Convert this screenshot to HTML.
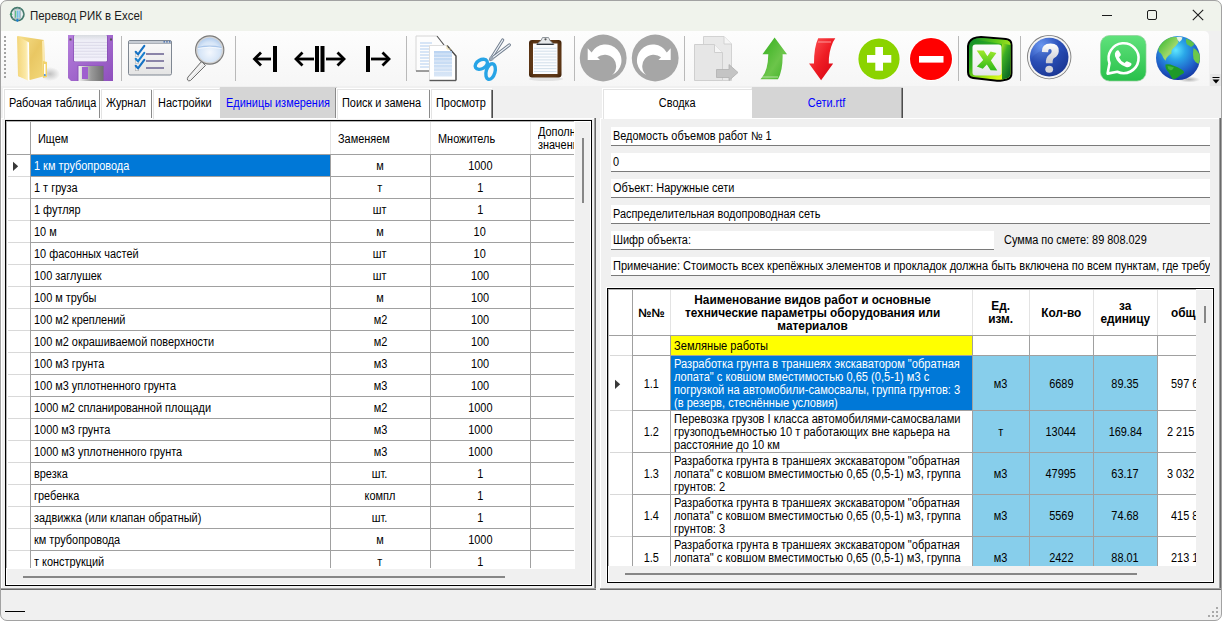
<!DOCTYPE html><html><head><meta charset="utf-8"><style>
*{box-sizing:border-box;margin:0;padding:0}
html,body{width:1222px;height:621px;overflow:hidden;background:#fff}
body{font-family:"Liberation Sans",sans-serif;font-size:12px;color:#000;position:relative}
.a{position:absolute;white-space:nowrap}
#win{position:absolute;left:0;top:0;width:1222px;height:621px;background:#f0f0f0;border-radius:7px;overflow:hidden}
#frame{position:absolute;left:0;top:0;width:1222px;height:621px;border:1px solid #a2a2a2;border-radius:7px}
#title{position:absolute;left:0;top:0;width:1222px;height:31px;background:#f0f3ec}
#tb{position:absolute;left:0;top:31px;width:1209px;height:55px;background:linear-gradient(#fdfdfd,#f6f6f6);border-top-right-radius:5px}
.sep{position:absolute;top:36px;width:1px;height:45px;background:#b9b9b9}
.hl{position:absolute;background:#a0a0a0;height:1px}
.vl{position:absolute;background:#a0a0a0;width:1px}
</style></head><body><div id="win">
<div id="title"></div>
<svg class="a" style="left:9px;top:6px" width="17" height="17" viewBox="0 0 17 17"><circle cx="8.4" cy="8.2" r="6.5" fill="#e9eef0" stroke="#3d7668" stroke-width="1.7"/><circle cx="8.4" cy="8.2" r="6.5" fill="none" stroke="#9ab0aa" stroke-width="0.6" stroke-dasharray="1 2"/><rect x="5.2" y="3.8" width="6.4" height="8.6" fill="#e4e8ea" stroke="#8fa2aa" stroke-width="0.6"/><rect x="6" y="4.6" width="1.3" height="7.2" fill="#5fbf86"/><rect x="7.8" y="4.6" width="1.3" height="7.2" fill="#74bde6"/><rect x="9.5" y="4.6" width="1.3" height="7.2" fill="#74bde6"/><path d="M8.4 12.4 L10.1 14.2 L8.4 16 L6.7 14.2 Z" fill="#1f7fd0"/><circle cx="2.1" cy="8.2" r="1.2" fill="#3a9a6a"/></svg>
<div class="a" style="left:30px;top:9px;line-height:15px;font-size:12px;color:#1b1b1b;"><span style="display:inline-block;transform:scaleX(0.955);transform-origin:0 0">Перевод РИК в Excel</span></div>
<div class="a" style="left:1102px;top:15px;width:10px;height:1px;background:#1c1c1c"></div>
<div class="a" style="left:1147px;top:10px;width:10px;height:10px;border:1px solid #1c1c1c;border-radius:2px"></div>
<svg class="a" style="left:1192px;top:9px" width="12" height="12" viewBox="0 0 12 12"><path d="M0.8 0.8L11.2 11.2M11.2 0.8L0.8 11.2" stroke="#1c1c1c" stroke-width="1.1"/></svg>
<div class="a" style="left:586px;top:0;width:230px;height:1px;background:repeating-linear-gradient(90deg,#555 0 3px,transparent 3px 6px);opacity:0.55"></div>
<div id="tb"></div>
<div class="a" style="left:4px;top:36px;width:2px;height:2px;background:#a3a3a3"></div>
<div class="a" style="left:4px;top:40px;width:2px;height:2px;background:#a3a3a3"></div>
<div class="a" style="left:4px;top:44px;width:2px;height:2px;background:#a3a3a3"></div>
<div class="a" style="left:4px;top:48px;width:2px;height:2px;background:#a3a3a3"></div>
<div class="a" style="left:4px;top:52px;width:2px;height:2px;background:#a3a3a3"></div>
<div class="a" style="left:4px;top:56px;width:2px;height:2px;background:#a3a3a3"></div>
<div class="a" style="left:4px;top:60px;width:2px;height:2px;background:#a3a3a3"></div>
<div class="a" style="left:4px;top:64px;width:2px;height:2px;background:#a3a3a3"></div>
<div class="a" style="left:4px;top:68px;width:2px;height:2px;background:#a3a3a3"></div>
<div class="a" style="left:4px;top:72px;width:2px;height:2px;background:#a3a3a3"></div>
<div class="a" style="left:4px;top:76px;width:2px;height:2px;background:#a3a3a3"></div>
<div class="sep" style="left:121px"></div>
<div class="sep" style="left:235px"></div>
<div class="sep" style="left:406px"></div>
<div class="sep" style="left:574px"></div>
<div class="sep" style="left:684px"></div>
<div class="sep" style="left:958px"></div>
<div class="sep" style="left:1020px"></div>
<!-- folder -->
<svg class="a" style="left:10px;top:32px" width="50" height="52" viewBox="0 0 50 52">
 <defs>
  <linearGradient id="fb" x1="0" y1="0" x2="1" y2="1"><stop offset="0" stop-color="#f6df8c"/><stop offset="0.5" stop-color="#e9c763"/><stop offset="1" stop-color="#f3d97c"/></linearGradient>
  <linearGradient id="ff" x1="0" y1="0" x2="1" y2="0"><stop offset="0" stop-color="#f3d57a"/><stop offset="0.7" stop-color="#fbe8a4"/><stop offset="1" stop-color="#fff6d0"/></linearGradient>
  <radialGradient id="fs" cx="0.5" cy="0.5" r="0.5"><stop offset="0" stop-color="#000" stop-opacity="0.22"/><stop offset="1" stop-color="#000" stop-opacity="0"/></radialGradient>
 </defs>
 <ellipse cx="40" cy="42" rx="10" ry="7" fill="url(#fs)"/>
 <path d="M8 4 L34 8 L35 44 L20 48 L8 44 Z" fill="url(#fb)"/>
 <path d="M34 8 L35 44 L33 45 L32 9 Z" fill="#fbeab0"/>
 <path d="M33 29 L37 30 L37 45 L33 46 Z" fill="#f2d36c"/>
 <rect x="34" y="32" width="1.5" height="11" fill="#fff"/>
 <circle cx="34.8" cy="43" r="1" fill="#3b8cf0"/>
 <path d="M7 4 L18.5 10 L19 49 L8 44 Z" fill="url(#ff)"/>
 <path d="M17.5 10 L19 10.5 L19.5 49 L18 48.5 Z" fill="#fff"/>
</svg>
<!-- floppy -->
<svg class="a" style="left:64px;top:32px" width="52" height="52" viewBox="0 0 52 52">
 <defs>
  <linearGradient id="fp" x1="0" y1="0" x2="1" y2="1"><stop offset="0" stop-color="#b57fdc"/><stop offset="1" stop-color="#8e4fbd"/></linearGradient>
  <linearGradient id="fl" x1="0" y1="0" x2="0" y2="1"><stop offset="0" stop-color="#d8dbe0"/><stop offset="0.2" stop-color="#eeeef6"/><stop offset="1" stop-color="#f2f0fb"/></linearGradient>
  <linearGradient id="fsh" x1="0" y1="0" x2="1" y2="0"><stop offset="0" stop-color="#f4f4f4"/><stop offset="0.5" stop-color="#9a9a9a"/><stop offset="1" stop-color="#6f6f6f"/></linearGradient>
 </defs>
 <path d="M4 3 L49 3 L49 49 L7 49 L4 46 Z" fill="url(#fp)"/>
 <rect x="9.5" y="3" width="34" height="27" rx="1.5" fill="#7b43a8"/>
 <rect x="10" y="3" width="33" height="26.5" rx="1" fill="url(#fl)"/>
 <g stroke="#d8d6e6" stroke-width="0.8"><line x1="10" y1="10.5" x2="43" y2="10.5"/><line x1="10" y1="13.4" x2="43" y2="13.4"/><line x1="10" y1="16.3" x2="43" y2="16.3"/><line x1="10" y1="19.3" x2="43" y2="19.3"/><line x1="10" y1="22.2" x2="43" y2="22.2"/><line x1="10" y1="25.1" x2="43" y2="25.1"/></g>
 <rect x="5.5" y="6.5" width="2" height="2" fill="#555"/>
 <rect x="46" y="6.5" width="2" height="2" fill="#555"/>
 <rect x="13.5" y="33.5" width="26" height="15.5" fill="#8a52b8"/>
 <rect x="14.5" y="34" width="25" height="15" fill="url(#fsh)"/>
 <rect x="18" y="35" width="6" height="12" fill="#9f5fcf"/>
</svg>
<!-- checklist -->
<svg class="a" style="left:124px;top:34px" width="52" height="48" viewBox="0 0 52 48">
 <defs><linearGradient id="cw" x1="0" y1="0" x2="0" y2="1"><stop offset="0" stop-color="#fbfbfb"/><stop offset="1" stop-color="#e4e4e4"/></linearGradient></defs>
 <rect x="4.5" y="6.5" width="43" height="34.5" rx="1.5" fill="url(#cw)" stroke="#7f8792" stroke-width="1"/>
 <rect x="5" y="7" width="42" height="2.2" fill="#c6ccd4"/>
 <rect x="5" y="9.2" width="42" height="0.8" fill="#9aa0a8"/><rect x="39.5" y="7.2" width="1.5" height="1.3" fill="#3a64a8"/><rect x="42.2" y="7.2" width="1.5" height="1.3" fill="#3a64a8"/><rect x="45" y="7.2" width="1.5" height="1.3" fill="#3a64a8"/>
 <g fill="#f4f4f4" stroke="#b0b0b0" stroke-width="0.6"><rect x="11.3" y="19.3" width="3.4" height="3.4"/><rect x="11.3" y="26.3" width="3.4" height="3.4"/><rect x="11.3" y="33.3" width="3.4" height="3.4"/></g>
 <g stroke="#8a84a8" stroke-width="1.8"><line x1="22" y1="20" x2="40" y2="20"/><line x1="22" y1="27" x2="40" y2="27"/><line x1="22" y1="34" x2="40" y2="34"/></g>
 <g fill="none" stroke-width="2.1" stroke-linecap="round" stroke-linejoin="round"><path d="M11.7 17.8 L14 20.4 L20.3 11.9" stroke="#1672c4"/><path d="M11.7 24.8 L14 27.4 L20.3 18.9" stroke="#1a80cf"/><path d="M11.7 31.8 L14 34.4 L20.3 25.9" stroke="#1672c4"/></g>
</svg>
<!-- magnifier -->
<svg class="a" style="left:184px;top:32px" width="46" height="52" viewBox="0 0 46 52">
 <defs>
  <radialGradient id="mg" cx="0.5" cy="0.6" r="0.6"><stop offset="0" stop-color="#f4f8fe"/><stop offset="0.7" stop-color="#d6e5f7"/><stop offset="1" stop-color="#b3cdee"/></radialGradient>
 </defs>
 <path d="M17.5 29.5 L21.5 33.5 L6.5 48.5 Q4.5 49.5 3.5 48 Q3 46.5 4 45 Z" fill="#eaeaea" stroke="#6e6e6e" stroke-width="1"/>
 <path d="M18.5 31.5 L5.5 46" stroke="#fff" stroke-width="1"/>
 <circle cx="25.7" cy="18" r="14.7" fill="#7a7a7a"/>
 <circle cx="25.7" cy="18" r="13.6" fill="#d4d4d4"/>
 <circle cx="25.7" cy="18" r="12.2" fill="url(#mg)"/>
 <path d="M13.8 15.5 Q25.7 12.8 37.6 15.5" stroke="#aac6ea" stroke-width="1.2" fill="none"/>
 <path d="M13.8 16.5 Q25.7 13.8 37.6 16.5" stroke="#fff" stroke-width="0.8" fill="none" opacity="0.8"/>
</svg>
<!-- align arrows -->
<svg class="a" style="left:250px;top:44px" width="150" height="30" viewBox="0 0 150 30">
 <g fill="none" stroke="#000" stroke-width="2.8" stroke-linecap="butt" stroke-linejoin="miter">
  <path d="M5 15 H21"/><path d="M11 8.5 L4.5 15 L11 21.5"/>
  <path d="M46.5 15 H64"/><path d="M52.5 8.5 L46 15 L52.5 21.5"/>
  <path d="M76 15 H93"/><path d="M87.5 8.5 L94 15 L87.5 21.5"/>
  <path d="M121 15 H138"/><path d="M132.5 8.5 L139 15 L132.5 21.5"/>
 </g>
 <rect x="23" y="2" width="4" height="26" fill="#000"/>
 <rect x="65" y="2" width="4" height="26" fill="#000"/>
 <rect x="70.5" y="2" width="4" height="26" fill="#000"/>
 <rect x="116" y="2" width="4" height="26" fill="#000"/>
</svg>
<!-- copy -->
<svg class="a" style="left:410px;top:32px" width="55" height="52" viewBox="0 0 55 52">
 <defs><linearGradient id="cb" x1="0" y1="0" x2="0" y2="1"><stop offset="0" stop-color="#a9c9ef"/><stop offset="1" stop-color="#cfe0f4"/></linearGradient></defs>
 <path d="M6 4 L27 4 L34 13 L34 39 L6 39 Z" fill="#fdfdfd" stroke="#d6d6d6" stroke-width="1"/>
 <path d="M27 4 L34 13" stroke="#555" stroke-width="1.1"/>
 <g stroke="#b8d2f0" stroke-width="1.1"><line x1="10" y1="11" x2="22" y2="11"/><line x1="10" y1="14" x2="28" y2="14"/><line x1="10" y1="17" x2="28" y2="17"/><line x1="10" y1="20" x2="28" y2="20"/><line x1="10" y1="23" x2="28" y2="23"/><line x1="10" y1="26" x2="28" y2="26"/><line x1="10" y1="29" x2="28" y2="29"/><line x1="10" y1="32" x2="28" y2="32"/><line x1="10" y1="35" x2="28" y2="35"/></g>
 <path d="M6 39 L20 39" stroke="#6a6a6a" stroke-width="1.2"/>
 <path d="M19.5 13.5 L37 13.5 L46 24 L46 48.5 L19.5 48.5 Z" fill="#fff" stroke="#dedede" stroke-width="1"/>
 <path d="M37 13.5 L46 24 L46 48.5" fill="none" stroke="#4a4a4a" stroke-width="1.4"/>
 <path d="M19.5 48.5 L46 48.5" stroke="#5a5a5a" stroke-width="1.4"/>
 <rect x="24" y="19" width="18" height="25.5" fill="url(#cb)" opacity="0.8"/>
 <g stroke="#fff" stroke-width="0.9" opacity="0.55"><line x1="24" y1="22" x2="42" y2="22"/><line x1="24" y1="25.5" x2="42" y2="25.5"/><line x1="24" y1="29" x2="42" y2="29"/><line x1="24" y1="32.5" x2="42" y2="32.5"/><line x1="24" y1="36" x2="42" y2="36"/><line x1="24" y1="39.5" x2="42" y2="39.5"/></g>
 <path d="M37 13.5 L37 17 L41 17" fill="none" stroke="#e8d8a0" stroke-width="0.8"/>
</svg>
<!-- scissors -->
<svg class="a" style="left:460px;top:34px" width="55" height="50" viewBox="0 0 55 50">
 <path d="M30.5 25.5 L42.7 6" stroke="#6f7c8c" stroke-width="3.2" stroke-linecap="round"/>
 <path d="M30.5 25.5 L42.7 6" stroke="#eef2f8" stroke-width="1.3" stroke-linecap="round"/>
 <path d="M31 25 L49.3 10.9" stroke="#6f7c8c" stroke-width="3.2" stroke-linecap="round"/>
 <path d="M31 25 L49.3 10.9" stroke="#eef2f8" stroke-width="1.3" stroke-linecap="round"/>
 <circle cx="31.5" cy="24.5" r="2.2" fill="#9aa6b4"/>
 <ellipse cx="21.3" cy="30.3" rx="6.6" ry="4.4" transform="rotate(-30 21.3 30.3)" fill="none" stroke="#27a4e6" stroke-width="3.4"/>
 <ellipse cx="30.6" cy="37.6" rx="8" ry="4.4" transform="rotate(-74 30.6 37.6)" fill="none" stroke="#27a4e6" stroke-width="3.4"/>
</svg>
<!-- clipboard -->
<svg class="a" style="left:522px;top:32px" width="48" height="52" viewBox="0 0 48 52">
 <defs><radialGradient id="clb" cx="0.5" cy="0.5" r="0.7"><stop offset="0" stop-color="#6e4622"/><stop offset="0.8" stop-color="#5a3414"/><stop offset="1" stop-color="#3c1f08"/></radialGradient></defs>
 <ellipse cx="24" cy="47" rx="17" ry="2" fill="#000" opacity="0.08"/>
 <rect x="7" y="8" width="32.5" height="37.5" rx="3" fill="url(#clb)"/>
 <rect x="11" y="11.5" width="24.5" height="30.5" fill="#fbfcfe"/>
 <g stroke="#cddbe8" stroke-width="0.9"><line x1="12" y1="16.3" x2="34.5" y2="16.3"/><line x1="12" y1="19.2" x2="34.5" y2="19.2"/><line x1="12" y1="22.1" x2="34.5" y2="22.1"/><line x1="12" y1="25.0" x2="34.5" y2="25.0"/><line x1="12" y1="27.9" x2="34.5" y2="27.9"/><line x1="12" y1="30.8" x2="34.5" y2="30.8"/><line x1="12" y1="33.7" x2="34.5" y2="33.7"/><line x1="12" y1="36.6" x2="34.5" y2="36.6"/><line x1="12" y1="39.5" x2="34.5" y2="39.5"/></g>
 <path d="M14.5 12.5 L19 8.5 L20.5 5.5 L26.5 5.5 L28 8.5 L32 12.5 Z" fill="#e6e8ea" stroke="#7a8088" stroke-width="0.8"/>
 <path d="M15 12.3 L31.5 12.3" stroke="#2a3038" stroke-width="1.3"/>
 <circle cx="23.5" cy="7.3" r="1.1" fill="#555"/>
</svg>
<!-- undo -->
<svg class="a" style="left:579px;top:34px" width="48" height="48" viewBox="0 0 48 48">
 <circle cx="24.2" cy="24" r="23.4" fill="#a6a6a6"/>
 <path d="M8.7 14.3 L8.7 26 L21 26 L18.3 23.3 A10.6 10.6 0 1 1 33 41 A16 16 0 1 0 12.6 18.4 Z" fill="#fff"/>
</svg>
<!-- redo -->
<svg class="a" style="left:631px;top:34px" width="48" height="48" viewBox="0 0 48 48">
 <g transform="translate(48.4 0) scale(-1 1)">
 <circle cx="24.2" cy="24" r="23.4" fill="#a6a6a6"/>
 <path d="M8.7 14.3 L8.7 26 L21 26 L18.3 23.3 A10.6 10.6 0 1 1 33 41 A16 16 0 1 0 12.6 18.4 Z" fill="#fff"/>
 </g>
</svg>
<!-- disabled doc arrow -->
<svg class="a" style="left:688px;top:32px" width="54" height="52" viewBox="0 0 54 52">
 <path d="M15.5 4.5 L36 4.5 L43.5 12 L43.5 48.5 L15.5 48.5 Z" fill="#e9e9e9" stroke="#d2d2d2" stroke-width="1"/>
 <path d="M36 4.5 L36 12 L43.5 12" fill="#f6f6f6" stroke="#d2d2d2" stroke-width="1"/>
 <path d="M6.5 12.5 L26.5 12.5 L34.5 20.5 L34.5 48.5 L6.5 48.5 Z" fill="#e6e6e6" stroke="#cfcfcf" stroke-width="1"/>
 <path d="M26.5 12.5 L26.5 20.5 L34.5 20.5" fill="#f6f6f6" stroke="#cfcfcf" stroke-width="1"/>
 <path d="M28.5 37.5 L41 37.5 L41 32.5 L50 40.5 L41 48.5 L41 45.5 L28.5 45.5 Z" fill="#c4c4c4" stroke="#b0b0b0" stroke-width="0.8"/>
</svg>
<!-- green up arrow -->
<svg class="a" style="left:752px;top:32px" width="42" height="52" viewBox="0 0 42 52">
 <defs><linearGradient id="ga" x1="0" y1="0" x2="1" y2="1"><stop offset="0" stop-color="#2fae1a"/><stop offset="0.6" stop-color="#6cc54a"/><stop offset="1" stop-color="#3fb128"/></linearGradient></defs>
 <path d="M22.6 5.4 L35 22.2 L30.6 22.2 Q31 38 26 47.3 L8.4 47.3 Q16 40 16.3 22.2 L10.5 22.2 Z" fill="url(#ga)"/>
 <path d="M10 45 L26 45" stroke="#b8e6a6" stroke-width="1.2" opacity="0.8"/>
</svg>
<!-- red down arrow -->
<svg class="a" style="left:800px;top:32px" width="42" height="52" viewBox="0 0 42 52">
 <defs><linearGradient id="ra" x1="0" y1="0" x2="1" y2="1"><stop offset="0" stop-color="#ff5a5a"/><stop offset="0.5" stop-color="#ee1c24"/><stop offset="1" stop-color="#d40010"/></linearGradient></defs>
 <path d="M18.2 6.3 L35.3 6.3 L33 10 Q28.5 20 28.8 31.4 L33.2 31.4 L21.1 48.2 L9 31.4 L14 31.4 Q14 15 18.2 6.3 Z" fill="url(#ra)"/>
 <path d="M18 10 L31 10" stroke="#ff9e9e" stroke-width="1.2" opacity="0.8"/>
</svg>
<!-- green plus -->
<svg class="a" style="left:856px;top:36px" width="46" height="46" viewBox="0 0 46 46">
 <circle cx="23" cy="23" r="21.5" fill="#fff" opacity="0.6"/>
 <circle cx="23" cy="23" r="20.6" fill="#8bd300"/>
 <rect x="19.3" y="11" width="7.7" height="23.7" fill="#fff"/>
 <rect x="11" y="19" width="24.3" height="7.7" fill="#fff"/>
</svg>
<!-- red minus -->
<svg class="a" style="left:908px;top:36px" width="46" height="46" viewBox="0 0 46 46">
 <circle cx="23" cy="23" r="22" fill="#fff"/>
 <circle cx="23" cy="23" r="21" fill="#ff0000"/>
 <rect x="11" y="20" width="24.5" height="6.6" fill="#fff"/>
</svg>
<!-- excel -->
<svg class="a" style="left:962px;top:32px" width="54" height="52" viewBox="0 0 54 52">
 <defs>
  <linearGradient id="xs" x1="0" y1="0" x2="0.6" y2="1"><stop offset="0" stop-color="#a8e020"/><stop offset="0.35" stop-color="#3cae24"/><stop offset="1" stop-color="#0b6a22"/></linearGradient>
  <linearGradient id="xf" x1="0" y1="0" x2="0.8" y2="1"><stop offset="0" stop-color="#0e8a2e"/><stop offset="0.45" stop-color="#36b21e"/><stop offset="0.8" stop-color="#b6ec10"/><stop offset="1" stop-color="#e8ff20"/></linearGradient>
  <linearGradient id="xt" x1="0" y1="0" x2="1" y2="0"><stop offset="0" stop-color="#1a8f2c"/><stop offset="0.6" stop-color="#5cc81a"/><stop offset="1" stop-color="#9fe020"/></linearGradient>
  <linearGradient id="xw" x1="0" y1="0" x2="0" y2="1"><stop offset="0" stop-color="#fbfbfb"/><stop offset="0.7" stop-color="#f0f0f2"/><stop offset="1" stop-color="#e2e2ea"/></linearGradient>
  <linearGradient id="xx" x1="0" y1="0" x2="0" y2="1"><stop offset="0" stop-color="#9fe82a"/><stop offset="1" stop-color="#2cb81c"/></linearGradient>
 </defs>
 <path d="M5 14 Q5.5 8 11 5.5 Q14 4 19 4 L44 6 Q50.5 6.5 50.5 13 L50.5 41 Q50.5 47 45 48.5 L40 49.5 Q37 50 33 49.5 L11 47 Q5 46 5 40 Z" fill="#000"/>
 <path d="M7 14 Q7.5 9.5 11.5 7.5 Q14.5 6 19 6 L43.5 8 Q48.5 8.5 48.5 13 L48.5 41 Q48.5 45.5 44.5 46.5 L40 47.5 Q37 48 33 47.5 L11.5 45 Q7 44.5 7 39.5 Z" fill="url(#xf)"/>
 <path d="M11 7.5 Q14.5 6 19 6 L43.5 8 Q48.5 8.5 48.5 13 L40 12 Z" fill="url(#xt)"/>
 <path d="M40 12 L48.5 13 L48.5 41 Q48.5 45.5 44.5 46.5 L40 47.5 Z" fill="url(#xs)"/>
 <rect x="10.5" y="12.5" width="29" height="31" rx="3" fill="url(#xw)"/>
 <path d="M14.7 18.6 L21.8 18.6 L25.4 24.3 L28.6 19.6 L34.4 21 L28.9 28.6 L35.3 38.4 L28.6 38.2 L24.8 32.4 L20.8 36.8 L14.8 34.6 L21.2 27.9 Z" fill="url(#xx)"/>
</svg>
<!-- help -->
<svg class="a" style="left:1026px;top:34px" width="48" height="48" viewBox="0 0 48 48">
 <defs>
  <radialGradient id="hb" cx="0.3" cy="0.2" r="0.9"><stop offset="0" stop-color="#6a96ee"/><stop offset="0.5" stop-color="#2c52bc"/><stop offset="1" stop-color="#1a3590"/></radialGradient>
  <linearGradient id="hq" x1="0" y1="0" x2="0" y2="1"><stop offset="0" stop-color="#ffffff"/><stop offset="1" stop-color="#c8c8d0"/></linearGradient>
 </defs>
 <circle cx="23.2" cy="23.1" r="22.2" fill="#7c7c7c"/>
 <circle cx="23.2" cy="23.1" r="21.3" fill="#f4f4f4"/>
 <circle cx="23.2" cy="23.1" r="19.3" fill="url(#hb)"/>
 <path d="M4.5 26 Q10 16 24 15 Q36 14 42 22 L42 30 Q38 40 24 42 Q8 41 4.5 26 Z" fill="#1c3a98" opacity="0.18"/>
 <path d="M15.8 18 Q15.5 9.5 24.6 9.5 Q33.2 9.7 32.8 17.2 Q32.6 21.4 28.2 24 Q26.4 25.2 26.6 29.3 L19.9 29.3 Q19.5 23.5 23.2 20.8 Q25.9 18.9 25.7 16.9 Q25.5 14.9 24 14.9 Q22 14.9 22.2 18.2 Z" fill="url(#hq)"/>
 <ellipse cx="23.2" cy="35.2" rx="3.9" ry="3.5" fill="#d4d4da"/>
</svg>
<!-- whatsapp -->
<svg class="a" style="left:1100px;top:35px" width="47" height="47" viewBox="0 0 47 47">
 <defs><linearGradient id="wa" x1="0" y1="0" x2="0" y2="1"><stop offset="0" stop-color="#60e27c"/><stop offset="1" stop-color="#28c04a"/></linearGradient></defs>
 <rect x="0.5" y="0.5" width="45.5" height="45.5" rx="9" fill="url(#wa)" stroke="#8fcf9a" stroke-width="0.7"/>
 <path d="M9.5 28.3 L7.6 38.6 L17.3 36.8 A15 15 0 1 0 9.5 28.3 Z" fill="none" stroke="#fff" stroke-width="2.6" stroke-linejoin="round"/>
 <path d="M15.5 17 Q17 14.5 18.6 15.5 L20.7 19.1 Q21.2 20.3 20 21.3 L19 22.2 Q20.7 26.3 24.6 28.1 L25.6 27 Q26.5 25.9 27.6 26.4 L31 28.1 Q32.2 28.8 31 30.5 Q29 33 26 32 Q17.5 29.1 15 21 Q14.5 18.5 15.5 17 Z" fill="#fff"/>
</svg>
<!-- globe -->
<svg class="a" style="left:1154px;top:34px" width="52" height="52" viewBox="0 0 52 52">
 <defs>
  <radialGradient id="gs" cx="0.45" cy="0.32" r="0.72"><stop offset="0" stop-color="#5fe6ff"/><stop offset="0.3" stop-color="#2aa6e8"/><stop offset="0.7" stop-color="#1f5fc8"/><stop offset="1" stop-color="#13309a"/></radialGradient>
  <radialGradient id="gsh" cx="0.5" cy="0.5" r="0.5"><stop offset="0" stop-color="#000" stop-opacity="0.28"/><stop offset="1" stop-color="#000" stop-opacity="0"/></radialGradient>
  <linearGradient id="gna" x1="0" y1="0" x2="1" y2="1"><stop offset="0" stop-color="#2fb52a"/><stop offset="0.6" stop-color="#9fd86a"/><stop offset="1" stop-color="#58b848"/></linearGradient>
 </defs>
 <ellipse cx="35" cy="45.5" rx="11" ry="3" fill="url(#gsh)"/>
 <circle cx="24" cy="24.1" r="22" fill="url(#gs)"/>
 <path d="M14 4.5 Q18 2.8 23 3.2 L24.5 8.5 Q22 12 18.5 15 Q16.5 17.5 17.5 19.5 Q14.5 21 12.5 24 L11.5 26.8 Q9 24 8 21 Q7 19 5 18 Q4 16 4.6 14 Q7.5 7.5 14 4.5 Z" fill="url(#gna)"/>
 <path d="M22.5 3 Q26 2.5 28.5 3.5 Q28 6.5 25.5 8 Q23.5 7 22.5 3 Z" fill="#e8f2e0"/>
 <path d="M11.5 30.5 Q15 29.5 19 31.5 Q24 33 27.5 35.5 Q30.5 37 30 39 Q26 41 23.5 43.5 Q20.5 45.5 18.5 45 Q16 41 14.5 38 Q11 35 11.5 30.5 Z" fill="#1e9a2a"/>
 <path d="M13.5 32 Q17 32 20 33.5 Q18 37 16 36 Q13.5 35 13.5 32 Z" fill="#4cc040" opacity="0.8"/>
 <path d="M32 4.5 Q37 6 40.5 10 Q39 12 37 13 Q35 11 33 10.5 Q31.5 8 32 4.5 Z" fill="#5cc24a"/>
 <path d="M39.5 14 Q43.5 16 45.8 21 Q46.5 26 44.5 30 Q41 28.5 39.5 25 Q38.5 20 39.5 14 Z" fill="#6cc84a"/>
</svg>
<!-- overflow -->
<div class="a" style="left:1210px;top:74px;width:11px;height:12px;background:#e6e6e6"></div>
<svg class="a" style="left:1212px;top:77px" width="8" height="7" viewBox="0 0 8 7"><rect x="0.5" y="0" width="7" height="1" fill="#000"/><path d="M0.5 2.5 L7.5 2.5 L4 6.5 Z" fill="#000"/></svg>

<div class="a" style="left:1px;top:118px;width:595px;height:472px;background:#f0f0f0;border-top:1px solid #fff;border-left:1px solid #fff"></div>
<div class="a" style="left:594px;top:118px;width:1px;height:472px;background:#a0a0a0"></div>
<div class="a" style="left:595px;top:118px;width:1px;height:472px;background:#6a6a6a"></div>
<div class="a" style="left:1px;top:588px;width:595px;height:1px;background:#a0a0a0"></div>
<div class="a" style="left:1px;top:589px;width:595px;height:1px;background:#6a6a6a"></div>
<div class="a" style="left:4px;top:89px;width:97px;height:30px;background:#fff;border-top:1px solid #e3e3e3;border-left:1px solid #e3e3e3;box-shadow:-1px -1px 0 #fff"></div>
<div class="a" style="left:99px;top:90px;width:2px;height:28px;background:linear-gradient(90deg,#8a8a8a 50%,#4c4c4c 50%)"></div>
<div class="a" style="left:9px;top:97px;line-height:13px;font-size:12px;"><span style="display:inline-block;transform:scaleX(0.91);transform-origin:0 0">Рабочая таблица</span></div>
<div class="a" style="left:101px;top:89px;width:52px;height:30px;background:#fff;border-top:1px solid #e3e3e3;border-left:1px solid #e3e3e3;box-shadow:-1px -1px 0 #fff"></div>
<div class="a" style="left:151px;top:90px;width:2px;height:28px;background:linear-gradient(90deg,#8a8a8a 50%,#4c4c4c 50%)"></div>
<div class="a" style="left:106px;top:97px;line-height:13px;font-size:12px;"><span style="display:inline-block;transform:scaleX(0.91);transform-origin:0 0">Журнал</span></div>
<div class="a" style="left:153px;top:89px;width:67px;height:30px;background:#fff;border-top:1px solid #e3e3e3;border-left:1px solid #e3e3e3;box-shadow:-1px -1px 0 #fff"></div>
<div class="a" style="left:158px;top:97px;line-height:13px;font-size:12px;"><span style="display:inline-block;transform:scaleX(0.91);transform-origin:0 0">Настройки</span></div>
<div class="a" style="left:220px;top:87px;width:117px;height:31px;background:#d5d5d5"></div>
<div class="a" style="left:335px;top:88px;width:2px;height:30px;background:linear-gradient(90deg,#8a8a8a 50%,#4c4c4c 50%)"></div>
<div class="a" style="left:226px;top:97px;line-height:13px;font-size:12px;color:#0000ff;"><span style="display:inline-block;transform:scaleX(0.91);transform-origin:0 0">Единицы измерения</span></div>
<div class="a" style="left:337px;top:89px;width:94px;height:30px;background:#fff;border-top:1px solid #e3e3e3;border-left:1px solid #e3e3e3;box-shadow:-1px -1px 0 #fff"></div>
<div class="a" style="left:429px;top:90px;width:2px;height:28px;background:linear-gradient(90deg,#8a8a8a 50%,#4c4c4c 50%)"></div>
<div class="a" style="left:342px;top:97px;line-height:13px;font-size:12px;"><span style="display:inline-block;transform:scaleX(0.91);transform-origin:0 0">Поиск и замена</span></div>
<div class="a" style="left:431px;top:89px;width:62px;height:30px;background:#fff;border-top:1px solid #e3e3e3;border-left:1px solid #e3e3e3;box-shadow:-1px -1px 0 #fff"></div>
<div class="a" style="left:491px;top:90px;width:2px;height:28px;background:linear-gradient(90deg,#8a8a8a 50%,#4c4c4c 50%)"></div>
<div class="a" style="left:436px;top:97px;line-height:13px;font-size:12px;"><span style="display:inline-block;transform:scaleX(0.91);transform-origin:0 0">Просмотр</span></div>
<div class="a" style="left:5px;top:120px;width:587px;height:466px;border:1px solid #000;background:#fff"></div>
<div class="a" style="left:6px;top:121px;width:585px;height:464px;border:1px solid #fff;background:#f0f0f0"></div>
<div class="a" style="left:7px;top:122px;width:568px;height:447px;background:#fff"></div>
<div class="a" style="left:6px;top:121px;width:568px;height:1px;background:#b4b4b4"></div>
<div class="a" style="left:6px;top:121px;width:1px;height:447px;background:#b4b4b4"></div>
<div class="vl" style="left:30px;top:122px;height:446px"></div>
<div class="vl" style="left:330px;top:122px;height:32px;background:#e3e3e3"></div>
<div class="vl" style="left:330px;top:154px;height:414px"></div>
<div class="vl" style="left:430px;top:122px;height:32px;background:#e3e3e3"></div>
<div class="vl" style="left:430px;top:154px;height:414px"></div>
<div class="vl" style="left:530px;top:122px;height:32px;background:#e3e3e3"></div>
<div class="vl" style="left:530px;top:154px;height:414px"></div>
<div class="hl" style="left:7px;top:154px;width:567px"></div>
<div class="a" style="left:38px;top:133px;line-height:13px;font-size:12px;"><span style="display:inline-block;transform:scaleX(0.91);transform-origin:0 0">Ищем</span></div>
<div class="a" style="left:338px;top:133px;line-height:13px;font-size:12px;"><span style="display:inline-block;transform:scaleX(0.91);transform-origin:0 0">Заменяем</span></div>
<div class="a" style="left:438px;top:133px;line-height:13px;font-size:12px;"><span style="display:inline-block;transform:scaleX(0.91);transform-origin:0 0">Множитель</span></div>
<div class="a" style="left:538px;top:126px;width:36px;height:28px;overflow:hidden"><span style="display:inline-block;line-height:13px;transform:scaleX(0.91);transform-origin:0 0">Дополн<br>значени</span></div>
<div class="a" style="left:7px;top:122px;width:567px;height:446px;overflow:hidden">
<div class="a" style="left:24px;top:33px;width:299px;height:21px;background:#0078d7"></div>
<svg class="a" style="left:5px;top:39px" width="8" height="11"><path d="M1 0.7L6.2 5.35L1 10Z" fill="#383838"/></svg>
<div class="hl" style="left:1px;top:54px;width:22px;background:#d9d9d9"></div>
<div class="hl" style="left:24px;top:54px;width:543px"></div>
<div class="a" style="left:27px;top:38px;line-height:13px;font-size:12px;color:#fff;"><span style="display:inline-block;transform:scaleX(0.91);transform-origin:0 0">1 км трубопровода</span></div>
<div class="a" style="left:323px;top:38px;line-height:13px;font-size:12px;width:100px;text-align:center;"><span style="display:inline-block;transform:scaleX(0.91);transform-origin:50% 0">м</span></div>
<div class="a" style="left:423px;top:38px;line-height:13px;font-size:12px;width:100px;text-align:center;"><span style="display:inline-block;transform:scaleX(0.91);transform-origin:50% 0">1000</span></div>
<div class="hl" style="left:1px;top:76px;width:22px;background:#d9d9d9"></div>
<div class="hl" style="left:24px;top:76px;width:543px"></div>
<div class="a" style="left:27px;top:60px;line-height:13px;font-size:12px;"><span style="display:inline-block;transform:scaleX(0.91);transform-origin:0 0">1 т груза</span></div>
<div class="a" style="left:323px;top:60px;line-height:13px;font-size:12px;width:100px;text-align:center;"><span style="display:inline-block;transform:scaleX(0.91);transform-origin:50% 0">т</span></div>
<div class="a" style="left:423px;top:60px;line-height:13px;font-size:12px;width:100px;text-align:center;"><span style="display:inline-block;transform:scaleX(0.91);transform-origin:50% 0">1</span></div>
<div class="hl" style="left:1px;top:98px;width:22px;background:#d9d9d9"></div>
<div class="hl" style="left:24px;top:98px;width:543px"></div>
<div class="a" style="left:27px;top:82px;line-height:13px;font-size:12px;"><span style="display:inline-block;transform:scaleX(0.91);transform-origin:0 0">1 футляр</span></div>
<div class="a" style="left:323px;top:82px;line-height:13px;font-size:12px;width:100px;text-align:center;"><span style="display:inline-block;transform:scaleX(0.91);transform-origin:50% 0">шт</span></div>
<div class="a" style="left:423px;top:82px;line-height:13px;font-size:12px;width:100px;text-align:center;"><span style="display:inline-block;transform:scaleX(0.91);transform-origin:50% 0">1</span></div>
<div class="hl" style="left:1px;top:120px;width:22px;background:#d9d9d9"></div>
<div class="hl" style="left:24px;top:120px;width:543px"></div>
<div class="a" style="left:27px;top:104px;line-height:13px;font-size:12px;"><span style="display:inline-block;transform:scaleX(0.91);transform-origin:0 0">10 м</span></div>
<div class="a" style="left:323px;top:104px;line-height:13px;font-size:12px;width:100px;text-align:center;"><span style="display:inline-block;transform:scaleX(0.91);transform-origin:50% 0">м</span></div>
<div class="a" style="left:423px;top:104px;line-height:13px;font-size:12px;width:100px;text-align:center;"><span style="display:inline-block;transform:scaleX(0.91);transform-origin:50% 0">10</span></div>
<div class="hl" style="left:1px;top:142px;width:22px;background:#d9d9d9"></div>
<div class="hl" style="left:24px;top:142px;width:543px"></div>
<div class="a" style="left:27px;top:126px;line-height:13px;font-size:12px;"><span style="display:inline-block;transform:scaleX(0.91);transform-origin:0 0">10 фасонных частей</span></div>
<div class="a" style="left:323px;top:126px;line-height:13px;font-size:12px;width:100px;text-align:center;"><span style="display:inline-block;transform:scaleX(0.91);transform-origin:50% 0">шт</span></div>
<div class="a" style="left:423px;top:126px;line-height:13px;font-size:12px;width:100px;text-align:center;"><span style="display:inline-block;transform:scaleX(0.91);transform-origin:50% 0">10</span></div>
<div class="hl" style="left:1px;top:164px;width:22px;background:#d9d9d9"></div>
<div class="hl" style="left:24px;top:164px;width:543px"></div>
<div class="a" style="left:27px;top:148px;line-height:13px;font-size:12px;"><span style="display:inline-block;transform:scaleX(0.91);transform-origin:0 0">100 заглушек</span></div>
<div class="a" style="left:323px;top:148px;line-height:13px;font-size:12px;width:100px;text-align:center;"><span style="display:inline-block;transform:scaleX(0.91);transform-origin:50% 0">шт</span></div>
<div class="a" style="left:423px;top:148px;line-height:13px;font-size:12px;width:100px;text-align:center;"><span style="display:inline-block;transform:scaleX(0.91);transform-origin:50% 0">100</span></div>
<div class="hl" style="left:1px;top:186px;width:22px;background:#d9d9d9"></div>
<div class="hl" style="left:24px;top:186px;width:543px"></div>
<div class="a" style="left:27px;top:170px;line-height:13px;font-size:12px;"><span style="display:inline-block;transform:scaleX(0.91);transform-origin:0 0">100 м трубы</span></div>
<div class="a" style="left:323px;top:170px;line-height:13px;font-size:12px;width:100px;text-align:center;"><span style="display:inline-block;transform:scaleX(0.91);transform-origin:50% 0">м</span></div>
<div class="a" style="left:423px;top:170px;line-height:13px;font-size:12px;width:100px;text-align:center;"><span style="display:inline-block;transform:scaleX(0.91);transform-origin:50% 0">100</span></div>
<div class="hl" style="left:1px;top:208px;width:22px;background:#d9d9d9"></div>
<div class="hl" style="left:24px;top:208px;width:543px"></div>
<div class="a" style="left:27px;top:192px;line-height:13px;font-size:12px;"><span style="display:inline-block;transform:scaleX(0.91);transform-origin:0 0">100 м2 креплений</span></div>
<div class="a" style="left:323px;top:192px;line-height:13px;font-size:12px;width:100px;text-align:center;"><span style="display:inline-block;transform:scaleX(0.91);transform-origin:50% 0">м2</span></div>
<div class="a" style="left:423px;top:192px;line-height:13px;font-size:12px;width:100px;text-align:center;"><span style="display:inline-block;transform:scaleX(0.91);transform-origin:50% 0">100</span></div>
<div class="hl" style="left:1px;top:230px;width:22px;background:#d9d9d9"></div>
<div class="hl" style="left:24px;top:230px;width:543px"></div>
<div class="a" style="left:27px;top:214px;line-height:13px;font-size:12px;"><span style="display:inline-block;transform:scaleX(0.91);transform-origin:0 0">100 м2 окрашиваемой поверхности</span></div>
<div class="a" style="left:323px;top:214px;line-height:13px;font-size:12px;width:100px;text-align:center;"><span style="display:inline-block;transform:scaleX(0.91);transform-origin:50% 0">м2</span></div>
<div class="a" style="left:423px;top:214px;line-height:13px;font-size:12px;width:100px;text-align:center;"><span style="display:inline-block;transform:scaleX(0.91);transform-origin:50% 0">100</span></div>
<div class="hl" style="left:1px;top:252px;width:22px;background:#d9d9d9"></div>
<div class="hl" style="left:24px;top:252px;width:543px"></div>
<div class="a" style="left:27px;top:236px;line-height:13px;font-size:12px;"><span style="display:inline-block;transform:scaleX(0.91);transform-origin:0 0">100 м3 грунта</span></div>
<div class="a" style="left:323px;top:236px;line-height:13px;font-size:12px;width:100px;text-align:center;"><span style="display:inline-block;transform:scaleX(0.91);transform-origin:50% 0">м3</span></div>
<div class="a" style="left:423px;top:236px;line-height:13px;font-size:12px;width:100px;text-align:center;"><span style="display:inline-block;transform:scaleX(0.91);transform-origin:50% 0">100</span></div>
<div class="hl" style="left:1px;top:274px;width:22px;background:#d9d9d9"></div>
<div class="hl" style="left:24px;top:274px;width:543px"></div>
<div class="a" style="left:27px;top:258px;line-height:13px;font-size:12px;"><span style="display:inline-block;transform:scaleX(0.91);transform-origin:0 0">100 м3 уплотненного грунта</span></div>
<div class="a" style="left:323px;top:258px;line-height:13px;font-size:12px;width:100px;text-align:center;"><span style="display:inline-block;transform:scaleX(0.91);transform-origin:50% 0">м3</span></div>
<div class="a" style="left:423px;top:258px;line-height:13px;font-size:12px;width:100px;text-align:center;"><span style="display:inline-block;transform:scaleX(0.91);transform-origin:50% 0">100</span></div>
<div class="hl" style="left:1px;top:296px;width:22px;background:#d9d9d9"></div>
<div class="hl" style="left:24px;top:296px;width:543px"></div>
<div class="a" style="left:27px;top:280px;line-height:13px;font-size:12px;"><span style="display:inline-block;transform:scaleX(0.91);transform-origin:0 0">1000 м2 спланированной площади</span></div>
<div class="a" style="left:323px;top:280px;line-height:13px;font-size:12px;width:100px;text-align:center;"><span style="display:inline-block;transform:scaleX(0.91);transform-origin:50% 0">м2</span></div>
<div class="a" style="left:423px;top:280px;line-height:13px;font-size:12px;width:100px;text-align:center;"><span style="display:inline-block;transform:scaleX(0.91);transform-origin:50% 0">1000</span></div>
<div class="hl" style="left:1px;top:318px;width:22px;background:#d9d9d9"></div>
<div class="hl" style="left:24px;top:318px;width:543px"></div>
<div class="a" style="left:27px;top:302px;line-height:13px;font-size:12px;"><span style="display:inline-block;transform:scaleX(0.91);transform-origin:0 0">1000 м3 грунта</span></div>
<div class="a" style="left:323px;top:302px;line-height:13px;font-size:12px;width:100px;text-align:center;"><span style="display:inline-block;transform:scaleX(0.91);transform-origin:50% 0">м3</span></div>
<div class="a" style="left:423px;top:302px;line-height:13px;font-size:12px;width:100px;text-align:center;"><span style="display:inline-block;transform:scaleX(0.91);transform-origin:50% 0">1000</span></div>
<div class="hl" style="left:1px;top:340px;width:22px;background:#d9d9d9"></div>
<div class="hl" style="left:24px;top:340px;width:543px"></div>
<div class="a" style="left:27px;top:324px;line-height:13px;font-size:12px;"><span style="display:inline-block;transform:scaleX(0.91);transform-origin:0 0">1000 м3 уплотненного грунта</span></div>
<div class="a" style="left:323px;top:324px;line-height:13px;font-size:12px;width:100px;text-align:center;"><span style="display:inline-block;transform:scaleX(0.91);transform-origin:50% 0">м3</span></div>
<div class="a" style="left:423px;top:324px;line-height:13px;font-size:12px;width:100px;text-align:center;"><span style="display:inline-block;transform:scaleX(0.91);transform-origin:50% 0">1000</span></div>
<div class="hl" style="left:1px;top:362px;width:22px;background:#d9d9d9"></div>
<div class="hl" style="left:24px;top:362px;width:543px"></div>
<div class="a" style="left:27px;top:346px;line-height:13px;font-size:12px;"><span style="display:inline-block;transform:scaleX(0.91);transform-origin:0 0">врезка</span></div>
<div class="a" style="left:323px;top:346px;line-height:13px;font-size:12px;width:100px;text-align:center;"><span style="display:inline-block;transform:scaleX(0.91);transform-origin:50% 0">шт.</span></div>
<div class="a" style="left:423px;top:346px;line-height:13px;font-size:12px;width:100px;text-align:center;"><span style="display:inline-block;transform:scaleX(0.91);transform-origin:50% 0">1</span></div>
<div class="hl" style="left:1px;top:384px;width:22px;background:#d9d9d9"></div>
<div class="hl" style="left:24px;top:384px;width:543px"></div>
<div class="a" style="left:27px;top:368px;line-height:13px;font-size:12px;"><span style="display:inline-block;transform:scaleX(0.91);transform-origin:0 0">гребенка</span></div>
<div class="a" style="left:323px;top:368px;line-height:13px;font-size:12px;width:100px;text-align:center;"><span style="display:inline-block;transform:scaleX(0.91);transform-origin:50% 0">компл</span></div>
<div class="a" style="left:423px;top:368px;line-height:13px;font-size:12px;width:100px;text-align:center;"><span style="display:inline-block;transform:scaleX(0.91);transform-origin:50% 0">1</span></div>
<div class="hl" style="left:1px;top:406px;width:22px;background:#d9d9d9"></div>
<div class="hl" style="left:24px;top:406px;width:543px"></div>
<div class="a" style="left:27px;top:390px;line-height:13px;font-size:12px;"><span style="display:inline-block;transform:scaleX(0.91);transform-origin:0 0">задвижка (или клапан обратный)</span></div>
<div class="a" style="left:323px;top:390px;line-height:13px;font-size:12px;width:100px;text-align:center;"><span style="display:inline-block;transform:scaleX(0.91);transform-origin:50% 0">шт.</span></div>
<div class="a" style="left:423px;top:390px;line-height:13px;font-size:12px;width:100px;text-align:center;"><span style="display:inline-block;transform:scaleX(0.91);transform-origin:50% 0">1</span></div>
<div class="hl" style="left:1px;top:428px;width:22px;background:#d9d9d9"></div>
<div class="hl" style="left:24px;top:428px;width:543px"></div>
<div class="a" style="left:27px;top:412px;line-height:13px;font-size:12px;"><span style="display:inline-block;transform:scaleX(0.91);transform-origin:0 0">км трубопровода</span></div>
<div class="a" style="left:323px;top:412px;line-height:13px;font-size:12px;width:100px;text-align:center;"><span style="display:inline-block;transform:scaleX(0.91);transform-origin:50% 0">м</span></div>
<div class="a" style="left:423px;top:412px;line-height:13px;font-size:12px;width:100px;text-align:center;"><span style="display:inline-block;transform:scaleX(0.91);transform-origin:50% 0">1000</span></div>
<div class="hl" style="left:1px;top:450px;width:22px;background:#d9d9d9"></div>
<div class="hl" style="left:24px;top:450px;width:543px"></div>
<div class="a" style="left:27px;top:434px;line-height:13px;font-size:12px;"><span style="display:inline-block;transform:scaleX(0.91);transform-origin:0 0">т конструкций</span></div>
<div class="a" style="left:323px;top:434px;line-height:13px;font-size:12px;width:100px;text-align:center;"><span style="display:inline-block;transform:scaleX(0.91);transform-origin:50% 0">т</span></div>
<div class="a" style="left:423px;top:434px;line-height:13px;font-size:12px;width:100px;text-align:center;"><span style="display:inline-block;transform:scaleX(0.91);transform-origin:50% 0">1</span></div>
</div>
<div class="a" style="left:582px;top:138px;width:2px;height:65px;background:#868686"></div>
<div class="a" style="left:23px;top:576px;width:482px;height:2px;background:#868686"></div>
<div class="a" style="left:600px;top:118px;width:621px;height:472px;background:#f0f0f0;border-top:1px solid #fff;border-left:1px solid #fff"></div>
<div class="a" style="left:1219px;top:118px;width:1px;height:472px;background:#a0a0a0"></div>
<div class="a" style="left:1220px;top:118px;width:1px;height:472px;background:#6a6a6a"></div>
<div class="a" style="left:600px;top:588px;width:621px;height:1px;background:#a0a0a0"></div>
<div class="a" style="left:600px;top:589px;width:621px;height:1px;background:#6a6a6a"></div>
<div class="a" style="left:603px;top:89px;width:149px;height:30px;background:#fff;border-top:1px solid #e3e3e3;border-left:1px solid #e3e3e3;box-shadow:-1px -1px 0 #fff"></div>
<div class="a" style="left:603px;top:97px;line-height:13px;font-size:12px;width:149px;text-align:center;"><span style="display:inline-block;transform:scaleX(0.91);transform-origin:50% 0">Сводка</span></div>
<div class="a" style="left:752px;top:87px;width:151px;height:31px;background:#d5d5d5"></div>
<div class="a" style="left:901px;top:88px;width:2px;height:30px;background:linear-gradient(90deg,#8a8a8a 50%,#4c4c4c 50%)"></div>
<div class="a" style="left:752px;top:97px;line-height:13px;font-size:12px;width:150px;text-align:center;color:#0000ff;"><span style="display:inline-block;transform:scaleX(0.91);transform-origin:50% 0">Сети.rtf</span></div>
<div class="a" style="left:611px;top:127px;width:599px;height:19px;background:#fff;border-bottom:1px solid #7a7a7a;overflow:hidden">
<div class="a" style="left:2px;top:3px;line-height:13px;font-size:12px;"><span style="display:inline-block;transform:scaleX(0.91);transform-origin:0 0">Ведомость объемов работ № 1</span></div>
</div>
<div class="a" style="left:611px;top:153px;width:599px;height:19px;background:#fff;border-bottom:1px solid #7a7a7a;overflow:hidden">
<div class="a" style="left:2px;top:3px;line-height:13px;font-size:12px;"><span style="display:inline-block;transform:scaleX(0.91);transform-origin:0 0">0</span></div>
</div>
<div class="a" style="left:611px;top:179px;width:599px;height:19px;background:#fff;border-bottom:1px solid #7a7a7a;overflow:hidden">
<div class="a" style="left:2px;top:3px;line-height:13px;font-size:12px;"><span style="display:inline-block;transform:scaleX(0.91);transform-origin:0 0">Объект: Наружные сети</span></div>
</div>
<div class="a" style="left:611px;top:205px;width:599px;height:19px;background:#fff;border-bottom:1px solid #7a7a7a;overflow:hidden">
<div class="a" style="left:2px;top:3px;line-height:13px;font-size:12px;"><span style="display:inline-block;transform:scaleX(0.91);transform-origin:0 0">Распределительная водопроводная сеть</span></div>
</div>
<div class="a" style="left:611px;top:231px;width:383px;height:19px;background:#fff;border-bottom:1px solid #7a7a7a;overflow:hidden">
<div class="a" style="left:2px;top:3px;line-height:13px;font-size:12px;"><span style="display:inline-block;transform:scaleX(0.91);transform-origin:0 0">Шифр объекта:</span></div>
</div>
<div class="a" style="left:611px;top:257px;width:599px;height:19px;background:#fff;border-bottom:1px solid #7a7a7a;overflow:hidden">
<div class="a" style="left:2px;top:3px;line-height:13px;font-size:12px;"><span style="display:inline-block;transform:scaleX(0.92);transform-origin:0 0">Примечание: Стоимость всех крепёжных элементов и прокладок должна быть включена по всем пунктам, где требуется</span></div>
</div>
<div class="a" style="left:1004px;top:234px;line-height:13px;font-size:12px;"><span style="display:inline-block;transform:scaleX(0.91);transform-origin:0 0">Сумма по смете: 89 808.029</span></div>
<div class="a" style="left:606px;top:287px;width:608px;height:296px;border-top:1px solid #fff;border-left:1px solid #fff"></div>
<div class="a" style="left:607px;top:288px;width:607px;height:295px;border:1px solid #000;background:#fff"></div>
<div class="a" style="left:608px;top:289px;width:605px;height:293px;border:1px solid #fff;background:#f0f0f0"></div>
<div class="a" style="left:608px;top:289px;width:588px;height:1px;background:#b4b4b4"></div>
<div class="a" style="left:608px;top:289px;width:1px;height:277px;background:#b4b4b4"></div>
<div class="a" style="left:609px;top:290px;width:587px;height:276px;background:#fff;overflow:hidden">
<div class="vl" style="left:23px;top:0;height:45px;background:#e3e3e3"></div>
<div class="vl" style="left:61px;top:0;height:45px;background:#e3e3e3"></div>
<div class="vl" style="left:363px;top:0;height:45px;background:#e3e3e3"></div>
<div class="vl" style="left:420px;top:0;height:45px;background:#e3e3e3"></div>
<div class="vl" style="left:484px;top:0;height:45px;background:#e3e3e3"></div>
<div class="vl" style="left:548px;top:0;height:45px;background:#e3e3e3"></div>
<div class="vl" style="left:23px;top:0;height:300px"></div>
<div class="hl" style="left:0;top:45px;width:587px"></div>
<div class="a" style="left:23px;top:17px;line-height:13px;font-size:12px;width:38px;text-align:center;font-weight:bold;"><span style="display:inline-block;transform:scaleX(0.985);transform-origin:50% 0">№№</span></div>
<div class="a" style="left:53px;top:4px;line-height:13px;font-size:12px;width:302px;text-align:center;font-weight:bold;"><span style="display:inline-block;transform:scaleX(0.985);transform-origin:50% 0">Наименование видов работ и основные<br>технические параметры оборудования или<br>материалов</span></div>
<div class="a" style="left:363px;top:10px;line-height:13px;font-size:12px;width:57px;text-align:center;font-weight:bold;"><span style="display:inline-block;transform:scaleX(0.985);transform-origin:50% 0">Ед.<br>изм.</span></div>
<div class="a" style="left:420px;top:17px;line-height:13px;font-size:12px;width:64px;text-align:center;font-weight:bold;"><span style="display:inline-block;transform:scaleX(0.985);transform-origin:50% 0">Кол-во</span></div>
<div class="a" style="left:484px;top:10px;line-height:13px;font-size:12px;width:64px;text-align:center;font-weight:bold;"><span style="display:inline-block;transform:scaleX(0.985);transform-origin:50% 0">за<br>единицу</span></div>
<div class="a" style="left:562px;top:17px;line-height:13px;font-size:12px;font-weight:bold;"><span style="display:inline-block;transform:scaleX(0.985);transform-origin:0 0">общая</span></div>
<div class="a" style="left:62px;top:46px;width:301px;height:19px;background:#ffff00"></div>
<div class="hl" style="left:1px;top:65px;width:22px;background:#d9d9d9"></div>
<div class="hl" style="left:24px;top:65px;width:563px"></div>
<div class="vl" style="left:61px;top:46px;height:19px"></div>
<div class="vl" style="left:363px;top:46px;height:19px"></div>
<div class="vl" style="left:420px;top:46px;height:19px"></div>
<div class="vl" style="left:484px;top:46px;height:19px"></div>
<div class="vl" style="left:548px;top:46px;height:19px"></div>
<div class="a" style="left:65px;top:50px;line-height:13px;font-size:12px;"><span style="display:inline-block;transform:scaleX(0.925);transform-origin:0 0">Земляные работы</span></div>
<div class="a" style="left:364px;top:66px;width:184px;height:54px;background:#87ceeb"></div>
<div class="a" style="left:62px;top:66px;width:301px;height:54px;background:#0078d7"></div>
<svg class="a" style="left:5px;top:89px" width="8" height="11"><path d="M1 0.7L6.2 5.35L1 10Z" fill="#383838"/></svg>
<div class="hl" style="left:1px;top:120px;width:22px;background:#d9d9d9"></div>
<div class="hl" style="left:24px;top:120px;width:563px"></div>
<div class="vl" style="left:61px;top:66px;height:54px"></div>
<div class="vl" style="left:363px;top:66px;height:54px"></div>
<div class="vl" style="left:420px;top:66px;height:54px"></div>
<div class="vl" style="left:484px;top:66px;height:54px"></div>
<div class="vl" style="left:548px;top:66px;height:54px"></div>
<div class="a" style="left:65px;top:68px;line-height:13px;font-size:12px;color:#fff;"><span style="display:inline-block;transform:scaleX(0.925);transform-origin:0 0">Разработка грунта в траншеях экскаватором "обратная<br>лопата" с ковшом вместимостью 0,65 (0,5-1) м3 с<br>погрузкой на автомобили-самосвалы, группа грунтов: 3<br>(в резерв, стеснённые условия)</span></div>
<div class="a" style="left:23px;top:88px;line-height:13px;font-size:12px;width:38px;text-align:center;"><span style="display:inline-block;transform:scaleX(0.91);transform-origin:50% 0">1.1</span></div>
<div class="a" style="left:363px;top:88px;line-height:13px;font-size:12px;width:57px;text-align:center;"><span style="display:inline-block;transform:scaleX(0.91);transform-origin:50% 0">м3</span></div>
<div class="a" style="left:420px;top:88px;line-height:13px;font-size:12px;width:64px;text-align:center;"><span style="display:inline-block;transform:scaleX(0.91);transform-origin:50% 0">6689</span></div>
<div class="a" style="left:484px;top:88px;line-height:13px;font-size:12px;width:64px;text-align:center;"><span style="display:inline-block;transform:scaleX(0.91);transform-origin:50% 0">89.35</span></div>
<div class="a" style="left:562px;top:88px;line-height:13px;font-size:12px;"><span style="display:inline-block;transform:scaleX(0.91);transform-origin:0 0">597 6</span></div>
<div class="a" style="left:364px;top:121px;width:184px;height:41px;background:#87ceeb"></div>
<div class="hl" style="left:1px;top:162px;width:22px;background:#d9d9d9"></div>
<div class="hl" style="left:24px;top:162px;width:563px"></div>
<div class="vl" style="left:61px;top:121px;height:41px"></div>
<div class="vl" style="left:363px;top:121px;height:41px"></div>
<div class="vl" style="left:420px;top:121px;height:41px"></div>
<div class="vl" style="left:484px;top:121px;height:41px"></div>
<div class="vl" style="left:548px;top:121px;height:41px"></div>
<div class="a" style="left:65px;top:123px;line-height:13px;font-size:12px;"><span style="display:inline-block;transform:scaleX(0.925);transform-origin:0 0">Перевозка грузов I класса автомобилями-самосвалами<br>грузоподъемностью 10 т работающих вне карьера на<br>расстояние до 10 км</span></div>
<div class="a" style="left:23px;top:136px;line-height:13px;font-size:12px;width:38px;text-align:center;"><span style="display:inline-block;transform:scaleX(0.91);transform-origin:50% 0">1.2</span></div>
<div class="a" style="left:363px;top:136px;line-height:13px;font-size:12px;width:57px;text-align:center;"><span style="display:inline-block;transform:scaleX(0.91);transform-origin:50% 0">т</span></div>
<div class="a" style="left:420px;top:136px;line-height:13px;font-size:12px;width:64px;text-align:center;"><span style="display:inline-block;transform:scaleX(0.91);transform-origin:50% 0">13044</span></div>
<div class="a" style="left:484px;top:136px;line-height:13px;font-size:12px;width:64px;text-align:center;"><span style="display:inline-block;transform:scaleX(0.91);transform-origin:50% 0">169.84</span></div>
<div class="a" style="left:558px;top:136px;line-height:13px;font-size:12px;"><span style="display:inline-block;transform:scaleX(0.91);transform-origin:0 0">2 215</span></div>
<div class="a" style="left:364px;top:163px;width:184px;height:41px;background:#87ceeb"></div>
<div class="hl" style="left:1px;top:204px;width:22px;background:#d9d9d9"></div>
<div class="hl" style="left:24px;top:204px;width:563px"></div>
<div class="vl" style="left:61px;top:163px;height:41px"></div>
<div class="vl" style="left:363px;top:163px;height:41px"></div>
<div class="vl" style="left:420px;top:163px;height:41px"></div>
<div class="vl" style="left:484px;top:163px;height:41px"></div>
<div class="vl" style="left:548px;top:163px;height:41px"></div>
<div class="a" style="left:65px;top:165px;line-height:13px;font-size:12px;"><span style="display:inline-block;transform:scaleX(0.925);transform-origin:0 0">Разработка грунта в траншеях экскаватором "обратная<br>лопата" с ковшом вместимостью 0,65 (0,5-1) м3, группа<br>грунтов: 2</span></div>
<div class="a" style="left:23px;top:178px;line-height:13px;font-size:12px;width:38px;text-align:center;"><span style="display:inline-block;transform:scaleX(0.91);transform-origin:50% 0">1.3</span></div>
<div class="a" style="left:363px;top:178px;line-height:13px;font-size:12px;width:57px;text-align:center;"><span style="display:inline-block;transform:scaleX(0.91);transform-origin:50% 0">м3</span></div>
<div class="a" style="left:420px;top:178px;line-height:13px;font-size:12px;width:64px;text-align:center;"><span style="display:inline-block;transform:scaleX(0.91);transform-origin:50% 0">47995</span></div>
<div class="a" style="left:484px;top:178px;line-height:13px;font-size:12px;width:64px;text-align:center;"><span style="display:inline-block;transform:scaleX(0.91);transform-origin:50% 0">63.17</span></div>
<div class="a" style="left:558px;top:178px;line-height:13px;font-size:12px;"><span style="display:inline-block;transform:scaleX(0.91);transform-origin:0 0">3 032</span></div>
<div class="a" style="left:364px;top:205px;width:184px;height:41px;background:#87ceeb"></div>
<div class="hl" style="left:1px;top:246px;width:22px;background:#d9d9d9"></div>
<div class="hl" style="left:24px;top:246px;width:563px"></div>
<div class="vl" style="left:61px;top:205px;height:41px"></div>
<div class="vl" style="left:363px;top:205px;height:41px"></div>
<div class="vl" style="left:420px;top:205px;height:41px"></div>
<div class="vl" style="left:484px;top:205px;height:41px"></div>
<div class="vl" style="left:548px;top:205px;height:41px"></div>
<div class="a" style="left:65px;top:207px;line-height:13px;font-size:12px;"><span style="display:inline-block;transform:scaleX(0.925);transform-origin:0 0">Разработка грунта в траншеях экскаватором "обратная<br>лопата" с ковшом вместимостью 0,65 (0,5-1) м3, группа<br>грунтов: 3</span></div>
<div class="a" style="left:23px;top:220px;line-height:13px;font-size:12px;width:38px;text-align:center;"><span style="display:inline-block;transform:scaleX(0.91);transform-origin:50% 0">1.4</span></div>
<div class="a" style="left:363px;top:220px;line-height:13px;font-size:12px;width:57px;text-align:center;"><span style="display:inline-block;transform:scaleX(0.91);transform-origin:50% 0">м3</span></div>
<div class="a" style="left:420px;top:220px;line-height:13px;font-size:12px;width:64px;text-align:center;"><span style="display:inline-block;transform:scaleX(0.91);transform-origin:50% 0">5569</span></div>
<div class="a" style="left:484px;top:220px;line-height:13px;font-size:12px;width:64px;text-align:center;"><span style="display:inline-block;transform:scaleX(0.91);transform-origin:50% 0">74.68</span></div>
<div class="a" style="left:562px;top:220px;line-height:13px;font-size:12px;"><span style="display:inline-block;transform:scaleX(0.91);transform-origin:0 0">415 8</span></div>
<div class="a" style="left:364px;top:247px;width:184px;height:41px;background:#87ceeb"></div>
<div class="hl" style="left:1px;top:288px;width:22px;background:#d9d9d9"></div>
<div class="hl" style="left:24px;top:288px;width:563px"></div>
<div class="vl" style="left:61px;top:247px;height:41px"></div>
<div class="vl" style="left:363px;top:247px;height:41px"></div>
<div class="vl" style="left:420px;top:247px;height:41px"></div>
<div class="vl" style="left:484px;top:247px;height:41px"></div>
<div class="vl" style="left:548px;top:247px;height:41px"></div>
<div class="a" style="left:65px;top:249px;line-height:13px;font-size:12px;"><span style="display:inline-block;transform:scaleX(0.925);transform-origin:0 0">Разработка грунта в траншеях экскаватором "обратная<br>лопата" с ковшом вместимостью 0,65 (0,5-1) м3, группа<br>грунтов: 3</span></div>
<div class="a" style="left:23px;top:262px;line-height:13px;font-size:12px;width:38px;text-align:center;"><span style="display:inline-block;transform:scaleX(0.91);transform-origin:50% 0">1.5</span></div>
<div class="a" style="left:363px;top:262px;line-height:13px;font-size:12px;width:57px;text-align:center;"><span style="display:inline-block;transform:scaleX(0.91);transform-origin:50% 0">м3</span></div>
<div class="a" style="left:420px;top:262px;line-height:13px;font-size:12px;width:64px;text-align:center;"><span style="display:inline-block;transform:scaleX(0.91);transform-origin:50% 0">2422</span></div>
<div class="a" style="left:484px;top:262px;line-height:13px;font-size:12px;width:64px;text-align:center;"><span style="display:inline-block;transform:scaleX(0.91);transform-origin:50% 0">88.01</span></div>
<div class="a" style="left:562px;top:262px;line-height:13px;font-size:12px;"><span style="display:inline-block;transform:scaleX(0.91);transform-origin:0 0">213 1</span></div>
</div>
<div class="a" style="left:1204px;top:306px;width:2px;height:17px;background:#868686"></div>
<div class="a" style="left:625px;top:573px;width:512px;height:2px;background:#868686"></div>
<div class="a" style="left:5px;top:611px;width:20px;height:1px;background:#000"></div>
<div class="a" style="left:1216px;top:607px;width:2px;height:2px;background:#a9a9a9"></div>
<div class="a" style="left:1212px;top:611px;width:2px;height:2px;background:#a9a9a9"></div>
<div class="a" style="left:1216px;top:611px;width:2px;height:2px;background:#a9a9a9"></div>
<div class="a" style="left:1208px;top:615px;width:2px;height:2px;background:#a9a9a9"></div>
<div class="a" style="left:1212px;top:615px;width:2px;height:2px;background:#a9a9a9"></div>
<div class="a" style="left:1216px;top:615px;width:2px;height:2px;background:#a9a9a9"></div>
</div><div id="frame"></div></body></html>
